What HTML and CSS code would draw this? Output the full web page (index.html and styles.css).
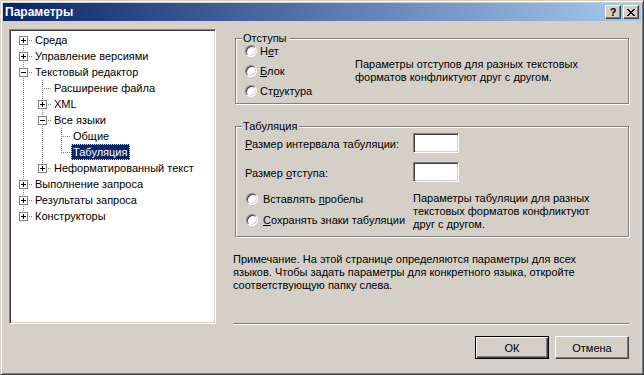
FILE: index.html
```html
<!DOCTYPE html>
<html lang="ru">
<head>
<meta charset="utf-8">
<title>Параметры</title>
<link rel="stylesheet" href="styles.css">
</head>
<body>
<div class="window">
  <div class="titlebar">
    <span class="title">Параметры</span>
    <div class="caption-buttons">
      <button class="cap-btn help" type="button">?</button>
      <button class="cap-btn close" type="button"><svg width="8" height="7" viewBox="0 0 8 7" shape-rendering="crispEdges"><path d="M0 0h2v1H0zM6 0h2v1H6zM1 1h2v1H1zM5 1h2v1H5zM2 2h4v1H2zM3 3h2v1H3zM2 4h4v1H2zM1 5h2v1H1zM5 5h2v1H5zM0 6h2v1H0zM6 6h2v1H6z" fill="#000"/></svg></button>
    </div>
  </div>
  <div class="content">
    <div class="tree">
      <div class="row"><span class="cell first"><span class="box plus"></span></span><span class="label">Среда</span></div>
      <div class="row"><span class="cell tee"><span class="box plus"></span></span><span class="label">Управление версиями</span></div>
      <div class="row"><span class="cell tee"><span class="box minus"></span></span><span class="label">Текстовый редактор</span></div>
      <div class="row"><span class="cell pipe"></span><span class="cell tee"></span><span class="label">Расширение файла</span></div>
      <div class="row"><span class="cell pipe"></span><span class="cell tee"><span class="box plus"></span></span><span class="label">XML</span></div>
      <div class="row"><span class="cell pipe"></span><span class="cell tee"><span class="box minus"></span></span><span class="label">Все языки</span></div>
      <div class="row"><span class="cell pipe"></span><span class="cell pipe"></span><span class="cell tee"></span><span class="label">Общие</span></div>
      <div class="row"><span class="cell pipe"></span><span class="cell pipe"></span><span class="cell ell"></span><span class="label selected">Табуляция</span></div>
      <div class="row"><span class="cell pipe"></span><span class="cell ell"><span class="box plus"></span></span><span class="label">Неформатированный текст</span></div>
      <div class="row"><span class="cell tee"><span class="box plus"></span></span><span class="label">Выполнение запроса</span></div>
      <div class="row"><span class="cell tee"><span class="box plus"></span></span><span class="label">Результаты запроса</span></div>
      <div class="row"><span class="cell ell"><span class="box plus"></span></span><span class="label">Конструкторы</span></div>
    </div>
    <div class="panel">
      <fieldset class="group indent-group">
        <legend>Отступы</legend>
        <div class="group-row">
          <div class="radios indent-radios">
            <label class="radio"><span class="radio-dot"></span><span class="radio-text">Н<u>е</u>т</span></label>
            <label class="radio"><span class="radio-dot"></span><span class="radio-text"><u>Б</u>лок</span></label>
            <label class="radio"><span class="radio-dot"></span><span class="radio-text">Ст<u>р</u>уктура</span></label>
          </div>
          <p class="desc">Параметры отступов для разных текстовых<br>форматов конфликтуют друг с другом.</p>
        </div>
      </fieldset>
      <fieldset class="group tab-group">
        <legend>Табуляция</legend>
        <div class="field-row first-field">
          <span class="field-label"><u>Р</u>азмер интервала табуляции:</span>
          <span class="num-input"></span>
        </div>
        <div class="field-row second-field">
          <span class="field-label">Размер <u>о</u>тступа:</span>
          <span class="num-input"></span>
        </div>
        <div class="tab-options">
          <div class="radios tab-radios">
            <label class="radio"><span class="radio-dot"></span><span class="radio-text">Вставлять <u>п</u>робелы</span></label>
            <label class="radio"><span class="radio-dot"></span><span class="radio-text"><u>С</u>охранять знаки табуляции</span></label>
          </div>
          <p class="desc">Параметры табуляции для разных<br>текстовых форматов конфликтуют<br>друг с другом.</p>
        </div>
      </fieldset>
      <p class="note">Примечание. На этой странице определяются параметры для всех<br>языков. Чтобы задать параметры для конкретного языка, откройте<br>соответствующую папку слева.</p>
      <div class="separator"></div>
      <div class="buttons">
        <button class="btn default" type="button">ОК</button>
        <button class="btn" type="button">Отмена</button>
      </div>
    </div>
  </div>
</div>
</body>
</html>
```
FILE: styles.css
```css
* { box-sizing: border-box; }
html, body { margin: 0; padding: 0; }
body {
  width: 644px;
  height: 375px;
  overflow: hidden;
  background: #d4d0c8;
  font-family: "Liberation Sans", Arial, sans-serif;
  font-size: 11px;
  color: #000;
}
.window {
  width: 644px;
  height: 375px;
  border: 1px solid;
  border-color: #d4d0c8 #404040 #404040 #d4d0c8;
  box-shadow: inset 1px 1px #fff, inset -1px -1px #808080;
  padding: 2px;
  background: #d4d0c8;
  display: flex;
  flex-direction: column;
}
.titlebar {
  height: 18px;
  flex: none;
  background: linear-gradient(to right, #0a246a, #a6caf0);
  display: flex;
  align-items: center;
  justify-content: space-between;
  padding: 0 2px;
}
.title {
  color: #fff;
  font-weight: bold;
  font-size: 12px;
  line-height: 14px;
}
.caption-buttons { display: flex; gap: 2px; }
.cap-btn {
  width: 16px;
  height: 14px;
  padding: 0;
  margin: 0;
  background: #d4d0c8;
  border: 1px solid;
  border-color: #fff #404040 #404040 #fff;
  box-shadow: inset -1px -1px #808080;
  display: flex;
  align-items: center;
  justify-content: center;
  font-family: "Liberation Sans", Arial, sans-serif;
  font-weight: bold;
  font-size: 11px;
  line-height: 11px;
  color: #000;
}
.cap-btn svg { display: block; }
.content {
  display: flex;
  padding: 8px 12px 0 6px;
}
.tree {
  width: 207px;
  height: 295px;
  flex: none;
  background: #fff;
  border: 1px solid;
  border-color: #808080 #fff #fff #808080;
  box-shadow: inset 1px 1px #404040, inset -1px -1px #d4d0c8;
  padding: 2px 0 0 4px;
  margin-right: 17px;
}
.row {
  display: flex;
  height: 16px;
  align-items: flex-start;
}
.cell {
  position: relative;
  width: 19px;
  height: 16px;
  flex: none;
}
.cell::before, .cell::after {
  content: "";
  position: absolute;
}
.cell::before {
  left: 9px;
  width: 1px;
  background-image: repeating-linear-gradient(to bottom, #808080 0 1px, transparent 1px 2px);
}
.cell::after {
  top: 8px;
  height: 1px;
  left: 9px;
  right: 0;
  background-image: repeating-linear-gradient(to right, #808080 0 1px, transparent 1px 2px);
}
.cell.pipe::before { top: 0; bottom: 0; }
.cell.pipe::after { display: none; }
.cell.tee::before { top: 0; bottom: 0; }
.cell.ell::before { top: 0; height: 9px; }
.cell.first::before { top: 8px; bottom: 0; }
.box {
  position: relative;
  z-index: 1;
  display: block;
  width: 9px;
  height: 9px;
  margin: 4px 0 0 5px;
  background: #fff;
  border: 1px solid #808080;
}
.box::before, .box::after {
  content: "";
  position: absolute;
  background: #000;
}
.box::before { left: 1px; top: 3px; width: 5px; height: 1px; }
.box.plus::after { left: 3px; top: 1px; width: 1px; height: 5px; }
.label {
  height: 16px;
  line-height: 14px;
  padding: 0 2px 0 1px;
  border: 1px solid transparent;
  white-space: nowrap;
}
.label.selected {
  background: #0a246a;
  color: #fff;
  border: 1px dotted #f2dc8c;
}
.panel {
  width: 396px;
  flex: none;
  display: flex;
  flex-direction: column;
}
.group {
  margin: 0 0 0 2px;
  padding: 0 8px 5px 9px;
  border: 1px solid #808080;
  box-shadow: inset 1px 1px #fff, 1px 1px #fff;
  min-width: 0;
}
.group legend {
  padding: 0 2px 0 1px;
  margin-left: -3px;
  line-height: 12px;
  background: #d4d0c8;
}
.indent-group { margin-top: 3px; }
.tab-group { margin-top: 16px; }
.group-row {
  display: flex;
  align-items: center;
}
.radios {
  display: flex;
  flex-direction: column;
  flex: none;
}
.indent-radios { width: 110px; gap: 6px; }
.tab-radios { width: 168px; gap: 7px; }
.radio {
  display: flex;
  align-items: center;
  gap: 3px;
  height: 14px;
  white-space: nowrap;
}
.radio-text { line-height: 14px; }
.tab-radios .radio { gap: 5px; padding-left: 1px; }
.radio-dot {
  width: 12px;
  height: 12px;
  flex: none;
  border-radius: 50%;
  background: #fff;
  border: 1px solid;
  border-color: #808080 #fff #fff #808080;
  box-shadow: inset 1px 1px #404040, inset -1px -1px #d4d0c8;
}
.desc {
  margin: 0;
  line-height: 13px;
}
.field-row {
  display: flex;
  align-items: center;
  height: 20px;
}
.first-field { margin-top: 1px; }
.second-field { margin-top: 9px; }
.field-label {
  width: 168px;
  flex: none;
  padding-top: 2px;
  white-space: nowrap;
}
.num-input {
  width: 46px;
  height: 20px;
  background: #fff;
  border: 1px solid;
  border-color: #808080 #fff #fff #808080;
  box-shadow: inset 1px 1px #404040, inset -1px -1px #d4d0c8;
}
.tab-options {
  display: flex;
  align-items: flex-start;
  margin-top: 10px;
}
.note {
  margin: 16px 0 0;
  line-height: 13px;
}
.separator {
  margin-top: 31px;
  height: 2px;
  border-top: 1px solid #808080;
  border-bottom: 1px solid #fff;
}
.buttons {
  display: flex;
  justify-content: flex-end;
  gap: 6px;
  margin-top: 11px;
}
.btn {
  width: 74px;
  height: 23px;
  padding: 0;
  margin: 0;
  background: #d4d0c8;
  border: 1px solid;
  border-color: #fff #404040 #404040 #fff;
  box-shadow: inset -1px -1px #808080;
  font-family: "Liberation Sans", Arial, sans-serif;
  font-size: 11px;
  color: #000;
}
.btn.default {
  border-color: #000;
  box-shadow: inset 1px 1px #fff, inset -1px -1px #404040, inset -2px -2px #808080;
}
```
